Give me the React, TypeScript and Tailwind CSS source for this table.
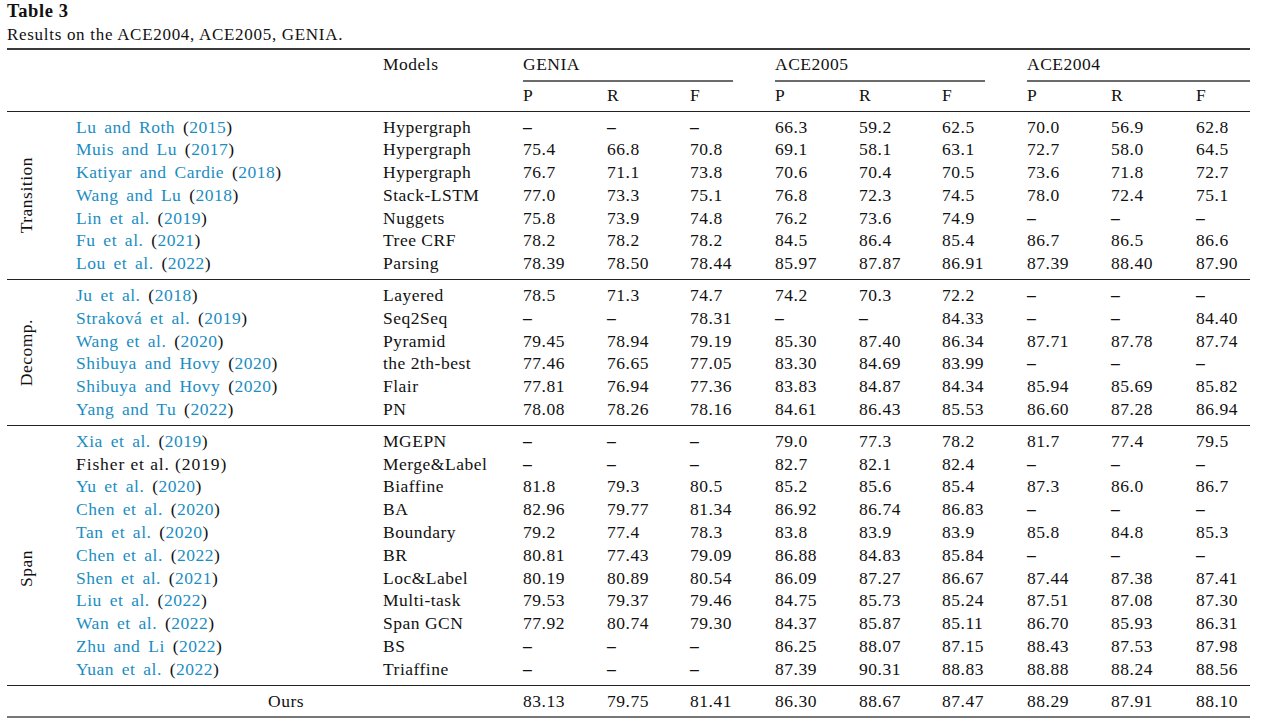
import React from 'react'

type Row = {
  cite: string[] // [authors, year] or [plain text]
  plain?: boolean
  model: string
  vals: string[]
}

const D = '–'

const transition: Row[] = [
  { cite: ['Lu and Roth', '2015'], model: 'Hypergraph', vals: [D, D, D, '66.3', '59.2', '62.5', '70.0', '56.9', '62.8'] },
  { cite: ['Muis and Lu', '2017'], model: 'Hypergraph', vals: ['75.4', '66.8', '70.8', '69.1', '58.1', '63.1', '72.7', '58.0', '64.5'] },
  { cite: ['Katiyar and Cardie', '2018'], model: 'Hypergraph', vals: ['76.7', '71.1', '73.8', '70.6', '70.4', '70.5', '73.6', '71.8', '72.7'] },
  { cite: ['Wang and Lu', '2018'], model: 'Stack-LSTM', vals: ['77.0', '73.3', '75.1', '76.8', '72.3', '74.5', '78.0', '72.4', '75.1'] },
  { cite: ['Lin et al.', '2019'], model: 'Nuggets', vals: ['75.8', '73.9', '74.8', '76.2', '73.6', '74.9', D, D, D] },
  { cite: ['Fu et al.', '2021'], model: 'Tree CRF', vals: ['78.2', '78.2', '78.2', '84.5', '86.4', '85.4', '86.7', '86.5', '86.6'] },
  { cite: ['Lou et al.', '2022'], model: 'Parsing', vals: ['78.39', '78.50', '78.44', '85.97', '87.87', '86.91', '87.39', '88.40', '87.90'] }
]

const decomp: Row[] = [
  { cite: ['Ju et al.', '2018'], model: 'Layered', vals: ['78.5', '71.3', '74.7', '74.2', '70.3', '72.2', D, D, D] },
  { cite: ['Straková et al.', '2019'], model: 'Seq2Seq', vals: [D, D, '78.31', D, D, '84.33', D, D, '84.40'] },
  { cite: ['Wang et al.', '2020'], model: 'Pyramid', vals: ['79.45', '78.94', '79.19', '85.30', '87.40', '86.34', '87.71', '87.78', '87.74'] },
  { cite: ['Shibuya and Hovy', '2020'], model: 'the 2th-best', vals: ['77.46', '76.65', '77.05', '83.30', '84.69', '83.99', D, D, D] },
  { cite: ['Shibuya and Hovy', '2020'], model: 'Flair', vals: ['77.81', '76.94', '77.36', '83.83', '84.87', '84.34', '85.94', '85.69', '85.82'] },
  { cite: ['Yang and Tu', '2022'], model: 'PN', vals: ['78.08', '78.26', '78.16', '84.61', '86.43', '85.53', '86.60', '87.28', '86.94'] }
]

const span: Row[] = [
  { cite: ['Xia et al.', '2019'], model: 'MGEPN', vals: [D, D, D, '79.0', '77.3', '78.2', '81.7', '77.4', '79.5'] },
  { cite: ['Fisher et al. (2019)'], plain: true, model: 'Merge&Label', vals: [D, D, D, '82.7', '82.1', '82.4', D, D, D] },
  { cite: ['Yu et al.', '2020'], model: 'Biaffine', vals: ['81.8', '79.3', '80.5', '85.2', '85.6', '85.4', '87.3', '86.0', '86.7'] },
  { cite: ['Chen et al.', '2020'], model: 'BA', vals: ['82.96', '79.77', '81.34', '86.92', '86.74', '86.83', D, D, D] },
  { cite: ['Tan et al.', '2020'], model: 'Boundary', vals: ['79.2', '77.4', '78.3', '83.8', '83.9', '83.9', '85.8', '84.8', '85.3'] },
  { cite: ['Chen et al.', '2022'], model: 'BR', vals: ['80.81', '77.43', '79.09', '86.88', '84.83', '85.84', D, D, D] },
  { cite: ['Shen et al.', '2021'], model: 'Loc&Label', vals: ['80.19', '80.89', '80.54', '86.09', '87.27', '86.67', '87.44', '87.38', '87.41'] },
  { cite: ['Liu et al.', '2022'], model: 'Multi-task', vals: ['79.53', '79.37', '79.46', '84.75', '85.73', '85.24', '87.51', '87.08', '87.30'] },
  { cite: ['Wan et al.', '2022'], model: 'Span GCN', vals: ['77.92', '80.74', '79.30', '84.37', '85.87', '85.11', '86.70', '85.93', '86.31'] },
  { cite: ['Zhu and Li', '2022'], model: 'BS', vals: [D, D, D, '86.25', '88.07', '87.15', '88.43', '87.53', '87.98'] },
  { cite: ['Yuan et al.', '2022'], model: 'Triaffine', vals: [D, D, D, '87.39', '90.31', '88.83', '88.88', '88.24', '88.56'] }
]

const ours = ['83.13', '79.75', '81.41', '86.30', '88.67', '87.47', '88.29', '87.91', '88.10']

// column widths after the group label column (69px)
const rowGrid =
  'grid grid-cols-[307px_140px_84px_83px_85px_84px_83px_85px_84px_85px_54px] h-[22.8px] items-center'

function Cite({ row }: { row: Row }) {
  if (row.plain) return <span className="tracking-[0.9px]">{row.cite[0]}</span>
  return (
    <span className="[word-spacing:3px]">
      <span className="text-[#1a8dc2]">{row.cite[0]}</span> (
      <span className="text-[#1a8dc2]">{row.cite[1]}</span>)
    </span>
  )
}

function Val({ v }: { v: string }) {
  if (v === D) return <div className="font-bold">{v}</div>
  return <div>{v}</div>
}

function Section({ label, rows, labelPad }: { label: string; rows: Row[]; labelPad: string }) {
  return (
    <div className="flex">
      <div className={`w-[69px] flex items-center pl-[11px] ${labelPad}`}>
        <span className="[writing-mode:vertical-rl] rotate-180 leading-none">{label}</span>
      </div>
      <div className="flex flex-col pt-[2px] pb-[6px]">
        {rows.map((r, i) => (
          <div key={i} className={rowGrid}>
            <div className="whitespace-nowrap">
              <Cite row={r} />
            </div>
            <div className="whitespace-nowrap">{r.model}</div>
            {r.vals.map((v, j) => (
              <Val key={j} v={v} />
            ))}
            <div />
          </div>
        ))}
      </div>
    </div>
  )
}

export default function App() {
  return (
    <div className="w-[1267px] h-[725px] bg-white text-[#111] font-['Liberation_Serif',serif] text-[17.5px] tracking-[0.5px] px-[7px] pt-[1px]">
      <div className="font-bold text-[18.5px] leading-[21px] tracking-[0.6px]">Table 3</div>
      <div className="text-[17px] tracking-[0.7px] leading-[22px] mt-[2px] mb-[2px]">
        Results on the ACE2004, ACE2005, GENIA.
      </div>

      <div className="w-[1243px]">
        <div className="h-[2px] bg-[#3a3a3a]" />

        {/* header */}
        <div className="grid grid-cols-[376px_140px_252px_252px_223px] pt-[3px]">
          <div />
          <div className="h-[23px] flex items-center">Models</div>
          <div>
            <div className="h-[23px] flex items-center">GENIA</div>
          </div>
          <div>
            <div className="h-[23px] flex items-center">ACE2005</div>
          </div>
          <div>
            <div className="h-[23px] flex items-center">ACE2004</div>
          </div>
          <div />
          <div />
          <div className="pt-[4px] mr-[42px]">
            <div className="h-[1.5px] bg-[#6b6b6b]" />
          </div>
          <div className="pt-[4px] mr-[42px]">
            <div className="h-[1.5px] bg-[#6b6b6b]" />
          </div>
          <div className="pt-[4px]">
            <div className="h-[1.5px] bg-[#6b6b6b]" />
          </div>
        </div>
        <div className="flex">
          <div className="w-[69px]" />
          <div className={`${rowGrid} h-[29px]`}>
            <div />
            <div />
            {['P', 'R', 'F', 'P', 'R', 'F', 'P', 'R', 'F'].map((h, i) => (
              <div key={i}>{h}</div>
            ))}
            <div />
          </div>
        </div>

        <div className="h-px bg-[#222]" />
        <Section label="Transition" rows={transition} labelPad="" />
        <div className="h-px bg-[#222]" />
        <Section label="Decomp." rows={decomp} labelPad="" />
        <div className="h-px bg-[#222]" />
        <Section label="Span" rows={span} labelPad="pt-[26px]" />
        <div className="h-px bg-[#222]" />

        {/* ours */}
        <div className="flex pt-[2px] pb-[6px]">
          <div className="w-[69px]" />
          <div className={rowGrid}>
            <div className="pl-[192px]">Ours</div>
            <div />
            {ours.map((v, i) => (
              <div key={i}>{v}</div>
            ))}
            <div />
          </div>
        </div>
        <div className="h-[2px] bg-[#777]" />
      </div>
    </div>
  )
}
